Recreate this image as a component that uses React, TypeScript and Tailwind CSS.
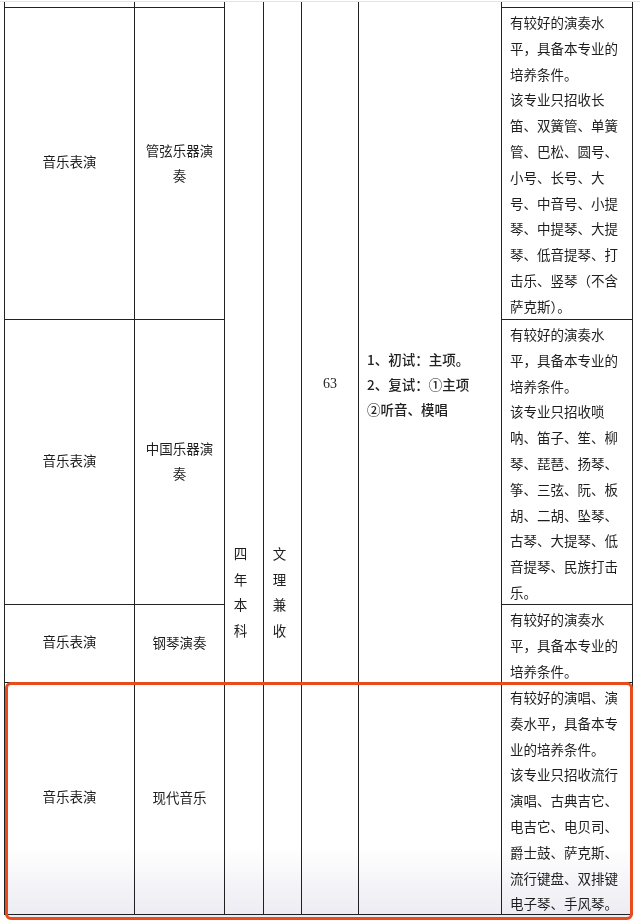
import React from "react"

const rows = [
  {
    major: "音乐表演",
    sub: ["管弦乐器演", "奏"],
    rowClass: "row-start-2",
    note: [
      "有较好的演奏水",
      "平，具备本专业的",
      "培养条件。",
      "该专业只招收长",
      "笛、双簧管、单簧",
      "管、巴松、圆号、",
      "小号、长号、大",
      "号、中音号、小提",
      "琴、中提琴、大提",
      "琴、低音提琴、打",
      "击乐、竖琴（不含",
      "萨克斯）。",
    ],
  },
  {
    major: "音乐表演",
    sub: ["中国乐器演", "奏"],
    rowClass: "row-start-3",
    note: [
      "有较好的演奏水",
      "平，具备本专业的",
      "培养条件。",
      "该专业只招收唢",
      "呐、笛子、笙、柳",
      "琴、琵琶、扬琴、",
      "筝、三弦、阮、板",
      "胡、二胡、坠琴、",
      "古琴、大提琴、低",
      "音提琴、民族打击",
      "乐。",
    ],
  },
  {
    major: "音乐表演",
    sub: ["钢琴演奏"],
    rowClass: "row-start-4",
    note: ["有较好的演奏水", "平，具备本专业的", "培养条件。"],
  },
  {
    major: "音乐表演",
    sub: ["现代音乐"],
    rowClass: "row-start-5",
    note: [
      "有较好的演唱、演",
      "奏水平，具备本专",
      "业的培养条件。",
      "该专业只招收流行",
      "演唱、古典吉它、",
      "电吉它、电贝司、",
      "爵士鼓、萨克斯、",
      "流行键盘、双排键",
      "电子琴、手风琴。",
    ],
  },
]

function VerticalText({ chars, className }: { chars: string[]; className?: string }) {
  return (
    <div className={"flex flex-col items-center pt-[540px] leading-[25.5px] " + (className ?? "")}>
      {chars.map((c) => (
        <span key={c}>{c}</span>
      ))}
    </div>
  )
}

export default function App() {
  return (
    <div className="relative w-[640px] h-[921px] overflow-hidden bg-white text-[13.5px] text-[#1e1e1e] font-['Liberation_Serif','Noto_Sans_CJK_SC',serif]">
      <div className="h-[2px] border-b border-[#e4e4e4]" />
      <div className="ml-[4px] grid grid-cols-[130px_90px_39px_38px_57px_143px_132px] grid-rows-[5px_312px_285px_78px_233px]">
        {/* top strip, continuation of the page above */}
        <div className="col-start-1 row-start-1 border-l border-[#222]" />
        <div className="col-start-2 row-start-1 border-l border-[#222]" />
        <div className="col-start-7 row-start-1 border-x border-[#222]" />

        {/* merged columns */}
        <div className="col-start-3 row-start-1 row-span-5 border-l border-b border-[#222]">
          <VerticalText chars={["四", "年", "本", "科"]} className="pr-[7px]" />
        </div>
        <div className="col-start-4 row-start-1 row-span-5 border-l border-b border-[#222]">
          <VerticalText chars={["文", "理", "兼", "收"]} className="pr-[6px]" />
        </div>
        <div className="col-start-5 row-start-1 row-span-5 border-l border-b border-[#222] text-center text-[14px] pt-[369px] leading-[26px]">
          63
        </div>
        <div className="col-start-6 row-start-1 row-span-5 border-l border-b border-[#222] pl-[8px] pt-[345px] leading-[25px] text-[#222] font-['Noto_Sans_CJK_SC',sans-serif] font-medium">
          <div>1、初试：主项。</div>
          <div>2、复试：①主项</div>
          <div>②听音、模唱</div>
        </div>

        {rows.map((r, i) => {
          const last = i === rows.length - 1
          const b = r.rowClass + " border-l border-t border-[#222] " + (last ? "border-b " : "")
          return (
            <React.Fragment key={i}>
              <div className={b + "col-start-1 flex items-center justify-center"}>{r.major}</div>
              <div className={b + "col-start-2 flex flex-col items-center justify-center leading-[25px]"}>
                {r.sub.map((s) => (
                  <div key={s}>{s}</div>
                ))}
              </div>
              <div className={b + "col-start-7 border-r pl-[8px] pt-[3px] leading-[25.8px] whitespace-nowrap"}>
                {r.note.map((n, j) => (
                  <div key={j}>{n}</div>
                ))}
              </div>
            </React.Fragment>
          )
        })}
      </div>

      {/* annotation box around the last row */}
      <div className="pointer-events-none absolute left-[5px] top-[682px] w-[628px] h-[238px] rounded-[6px] border-[3px] border-[#e94b1c] overflow-hidden">
        <div className="absolute inset-x-0 bottom-0 h-[70px] mix-blend-multiply bg-gradient-to-b from-[#eeeef4]/0 to-[#ebebf2]" />
      </div>
    </div>
  )
}
